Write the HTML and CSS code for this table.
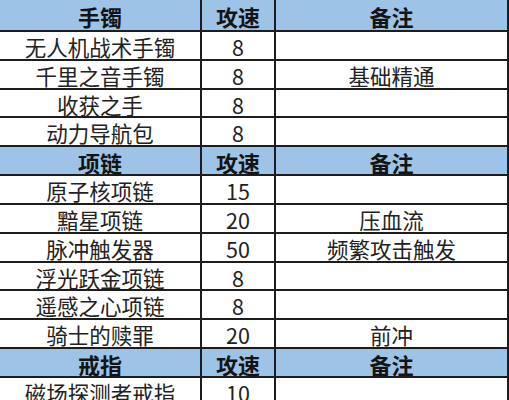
FILE: index.html
```html
<!DOCTYPE html>
<html lang="zh-CN">
<head>
<meta charset="utf-8">
<title>攻速表</title>
<link rel="stylesheet" href="styles.css">
</head>
<body>
<table class="sheet">
  <colgroup>
    <col class="c-name">
    <col class="c-speed">
    <col class="c-note">
  </colgroup>
  <tbody>
    <tr class="head first"><td>手镯</td><td>攻速</td><td>备注</td></tr>
    <tr><td>无人机战术手镯</td><td>8</td><td></td></tr>
    <tr><td>千里之音手镯</td><td>8</td><td>基础精通</td></tr>
    <tr><td>收获之手</td><td>8</td><td></td></tr>
    <tr><td>动力导航包</td><td>8</td><td></td></tr>
    <tr class="head"><td>项链</td><td>攻速</td><td>备注</td></tr>
    <tr><td>原子核项链</td><td>15</td><td></td></tr>
    <tr><td>黯星项链</td><td>20</td><td>压血流</td></tr>
    <tr><td>脉冲触发器</td><td>50</td><td>频繁攻击触发</td></tr>
    <tr><td>浮光跃金项链</td><td>8</td><td></td></tr>
    <tr><td>遥感之心项链</td><td>8</td><td></td></tr>
    <tr><td>骑士的赎罪</td><td>20</td><td>前冲</td></tr>
    <tr class="head"><td>戒指</td><td>攻速</td><td>备注</td></tr>
    <tr><td>磁场探测者戒指</td><td>10</td><td></td></tr>
  </tbody>
</table>
</body>
</html>
```
FILE: styles.css
```css
html, body {
  margin: 0;
  padding: 0;
  background: #ffffff;
}

.sheet {
  border-collapse: collapse;
  table-layout: fixed;
  width: 508px;
  font-family: "Noto Sans CJK SC", "Noto Sans", sans-serif;
  color: #222222;
}

.c-name { width: 201px; }
.c-speed { width: 74px; }
.c-note { width: 233px; }

.sheet td {
  border: 2px solid #1d1d1d;
  height: 28.83px;
  padding: 2px 0 0 0;
  box-sizing: border-box;
  text-align: center;
  vertical-align: middle;
  font-size: 21.5px;
  line-height: 23px;
  white-space: nowrap;
}

.sheet td:first-child {
  border-left: none;
}

.sheet tr.first td {
  border-top: none;
  height: 31px;
}

.sheet tr.head td {
  background: #9dc3e6;
  font-weight: 700;
  color: #141414;
  font-size: 22px;
  line-height: 22px;
}
```
